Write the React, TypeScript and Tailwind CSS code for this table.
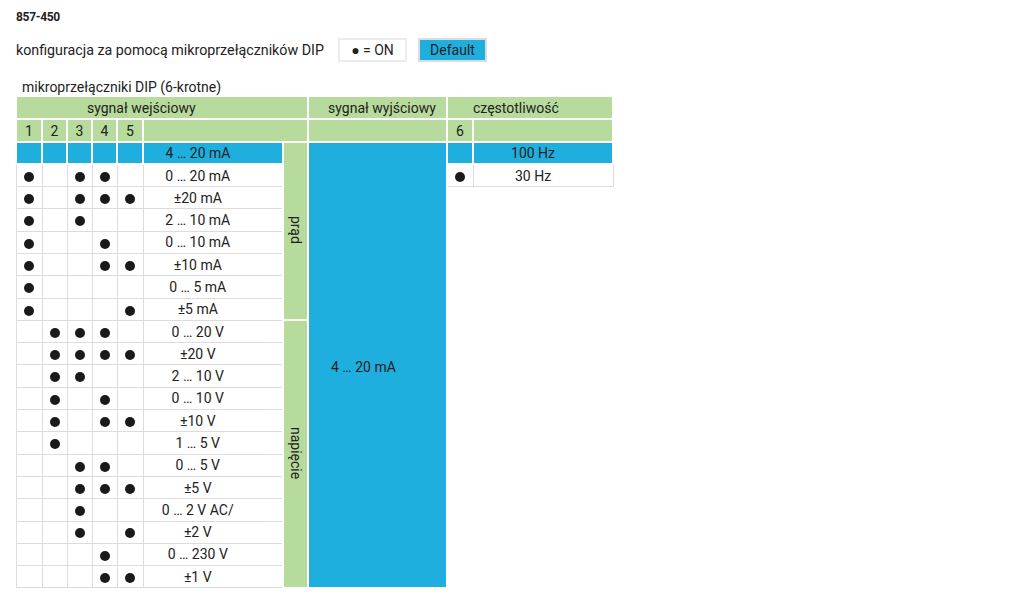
import React from "react";

const BLUE = "bg-[#1fafdf] border-2 border-white";
const GREEN = "bg-[#b7db9c] border-2 border-white";
const WHITE = "bg-white border border-[#dcdcdc]";

type Row = { label: string; dots: number[] };

const rows: Row[] = [
  { label: "4 … 20 mA", dots: [] },
  { label: "0 … 20 mA", dots: [1, 3, 4] },
  { label: "±20 mA", dots: [1, 3, 4, 5] },
  { label: "2 … 10 mA", dots: [1, 3] },
  { label: "0 … 10 mA", dots: [1, 4] },
  { label: "±10 mA", dots: [1, 4, 5] },
  { label: "0 … 5 mA", dots: [1] },
  { label: "±5 mA", dots: [1, 5] },
  { label: "0 … 20 V", dots: [2, 3, 4] },
  { label: "±20 V", dots: [2, 3, 4, 5] },
  { label: "2 … 10 V", dots: [2, 3] },
  { label: "0 … 10 V", dots: [2, 4] },
  { label: "±10 V", dots: [2, 4, 5] },
  { label: "1 … 5 V", dots: [2] },
  { label: "0 … 5 V", dots: [3, 4] },
  { label: "±5 V", dots: [3, 4, 5] },
  { label: "0 … 2 V AC/", dots: [3] },
  { label: "±2 V", dots: [3, 5] },
  { label: "0 … 230 V", dots: [4] },
  { label: "±1 V", dots: [4, 5] },
];

function Dot() {
  return <span className="inline-block w-[10px] h-[10px] rounded-full bg-[#1a1a1a] align-middle" />;
}

export default function App() {
  return (
    <div className="w-[1024px] h-[605px] bg-white text-[#222] font-['Roboto',sans-serif] overflow-hidden">
      <div className="pl-[16px] pt-[10px]">
        <div className="text-[12px] font-bold leading-[14px] tracking-[-0.3px]">857-450</div>
        <div className="flex items-center mt-[14px] h-[24px]">
          <span className="text-[14.25px] leading-[16px] w-[322px]">konfiguracja za pomocą mikroprzełączników DIP</span>
          <div className="w-[69px] h-[24px] border-2 border-[#ececec] flex items-center justify-center text-[14px]">
            ● = ON
          </div>
          <div className="ml-[11px] w-[69px] h-[24px] border-2 border-[#dcdcdc] bg-[#1fafdf] flex items-center justify-center text-[14px]">
            Default
          </div>
        </div>
        <div className="pl-[6px] mt-[18px] text-[14px] leading-[15px]">mikroprzełączniki DIP (6-krotne)</div>
        <table className="border-collapse table-fixed w-[597px] text-[14px] leading-[16px] -ml-[1px]">
          <colgroup>
            <col className="w-[26px]" />
            <col className="w-[25px]" />
            <col className="w-[25px]" />
            <col className="w-[25px]" />
            <col className="w-[26px]" />
            <col className="w-[140px]" />
            <col className="w-[25px]" />
            <col className="w-[139px]" />
            <col className="w-[26px]" />
            <col className="w-[140px]" />
          </colgroup>
          <tbody>
            <tr className="h-[23px]">
              <td colSpan={7} className={`${GREEN} pl-[70px] text-left`}>sygnał wejściowy</td>
              <td className={`${GREEN} pl-[19px] text-left`}>sygnał wyjściowy</td>
              <td colSpan={2} className={`${GREEN} pl-[25px] text-left`}>częstotliwość</td>
            </tr>
            <tr className="h-[23px]">
              {[1, 2, 3, 4, 5].map((n) => (
                <td key={n} className={`${GREEN} text-center`}>{n}</td>
              ))}
              <td colSpan={2} className={GREEN}></td>
              <td className={GREEN}></td>
              <td className={`${GREEN} text-center`}>6</td>
              <td className={GREEN}></td>
            </tr>
            {rows.map((r, i) => {
              const cell = i === 0 ? BLUE : WHITE;
              return (
                <tr key={i} className="h-[22.3px]">
                  {[1, 2, 3, 4, 5].map((c) => (
                    <td key={c} className={`${cell} text-center p-0`}>
                      {r.dots.includes(c) ? <Dot /> : null}
                    </td>
                  ))}
                  <td className={`${cell} text-center p-0 pr-[30px] whitespace-nowrap`}>{r.label}</td>
                  {i === 0 && (
                    <td rowSpan={8} className={`${GREEN} text-center align-middle p-0`}>
                      <span className="inline-block [writing-mode:vertical-rl]">prąd</span>
                    </td>
                  )}
                  {i === 8 && (
                    <td rowSpan={12} className={`${GREEN} text-center align-middle p-0`}>
                      <span className="inline-block [writing-mode:vertical-rl]">napięcie</span>
                    </td>
                  )}
                  {i === 0 && (
                    <td rowSpan={20} className={`${BLUE} pl-[22px] pt-[5px] align-middle text-left`}>
                      4 … 20 mA
                    </td>
                  )}
                  {i === 0 && (
                    <>
                      <td className={BLUE}></td>
                      <td className={`${BLUE} text-center pr-[20px]`}>100 Hz</td>
                    </>
                  )}
                  {i === 1 && (
                    <>
                      <td className={`${WHITE} text-center`}>
                        <Dot />
                      </td>
                      <td className={`${WHITE} text-center pr-[20px]`}>30 Hz</td>
                    </>
                  )}
                  {i === 2 && <td rowSpan={18} colSpan={2} className="border-0 bg-white"></td>}
                </tr>
              );
            })}
          </tbody>
        </table>
      </div>
    </div>
  );
}
